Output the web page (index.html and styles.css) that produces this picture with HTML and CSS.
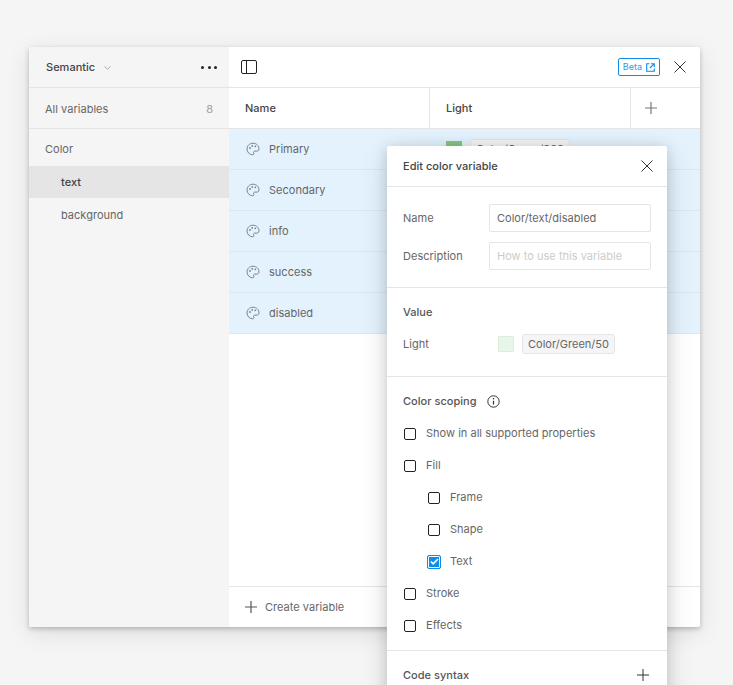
FILE: index.html
```html
<!DOCTYPE html>
<html lang="en">
<head>
<meta charset="utf-8">
<title>Variables</title>
<link rel="stylesheet" href="styles.css">
</head>
<body>
<svg class="defs" width="0" height="0" aria-hidden="true">
  <symbol id="palette" viewBox="0 0 14 14">
    <path d="M7 1.2C3.6 1.2 1 3.8 1 7c0 3.2 2.7 5.8 5.6 5.8 1.3 0 1.5-.9 1.1-1.7-.5-1 .1-2 1.2-2h1.9c1.3 0 2.2-.9 2.2-2.1 0-3.300-2.700-5.800-6-5.800z" fill="none" stroke="#7b828b" stroke-width="1"/>
    <circle cx="4" cy="6" r=".9" fill="#7b828b"/><circle cx="6.200" cy="3.900" r=".9" fill="#7b828b"/><circle cx="9.300" cy="4.300" r=".9" fill="#7b828b"/>
  </symbol>
</svg>
<main class="panel">
  <aside class="sidebar">
    <div class="side-head">
      <span class="collection">Semantic</span>
      <svg class="chev" width="7" height="4" viewBox="0 0 7 4"><path d="M.5.300 3.500 3.300 6.500.300" fill="none" stroke="#aaa" stroke-width="1"/></svg>
      <span class="dots"><i></i><i></i><i></i></span>
    </div>
    <div class="side-all"><span>All variables</span><span class="count">8</span></div>
    <div class="side-groups">
      <div class="group-title">Color</div>
      <div class="group-item selected">text</div>
      <div class="group-item">background</div>
    </div>
  </aside>
  <section class="content">
    <header class="top">
      <svg width="16" height="14" viewBox="0 0 16 14"><rect x=".5" y=".5" width="15" height="13" rx="1.500" fill="none" stroke="#222"/><path d="M5.500 .5v13" stroke="#222"/></svg>
      <span class="beta">Beta
        <svg width="9" height="9" viewBox="0 0 9 9"><path d="M3.500.7H.7v7.600h7.600V5.500M5 .7h3.300V4M8.300.7 4 5" fill="none" stroke="#0d8ce9" stroke-width="1.100"/></svg>
      </span>
      <svg class="close" width="12" height="12" viewBox="0 0 12 12"><path d="m.5.500 11 11m0-11-11 11" stroke="#333" stroke-width="1"/></svg>
    </header>
    <div class="thead">
      <div class="col-name">Name</div>
      <div class="col-light">Light</div>
      <div class="col-add"><svg width="12" height="12" viewBox="0 0 12 12"><path d="M6 0v12M0 6h12" stroke="#777" stroke-width="1.200"/></svg></div>
    </div>
    <div class="rows">
      <div class="row"><div class="col-name"><svg class="pal"><use href="#palette"/></svg>Primary</div><div class="col-light"><span class="swatch green"></span><span class="chip">Color/Green/300</span></div><div class="col-add"></div></div>
      <div class="row"><div class="col-name"><svg class="pal"><use href="#palette"/></svg>Secondary</div><div class="col-light"></div><div class="col-add"></div></div>
      <div class="row"><div class="col-name"><svg class="pal"><use href="#palette"/></svg>info</div><div class="col-light"></div><div class="col-add"></div></div>
      <div class="row"><div class="col-name"><svg class="pal"><use href="#palette"/></svg>success</div><div class="col-light"></div><div class="col-add"></div></div>
      <div class="row"><div class="col-name"><svg class="pal"><use href="#palette"/></svg>disabled</div><div class="col-light"></div><div class="col-add"></div></div>
    </div>
    <footer class="foot">
      <svg width="12" height="12" viewBox="0 0 12 12"><path d="M6 0v12M0 6h12" stroke="#555" stroke-width="1.200"/></svg>
      <span>Create variable</span>
    </footer>
  </section>
</main>
<div class="dialog">
  <div class="dlg-head"><span>Edit color variable</span>
    <svg width="12" height="12" viewBox="0 0 12 12"><path d="m.5.500 11 11m0-11-11 11" stroke="#333" stroke-width="1"/></svg>
  </div>
  <div class="dlg-fields">
    <label class="field"><span>Name</span><span class="input">Color/text/disabled</span></label>
    <label class="field"><span>Description</span><span class="input ph">How to use this variable</span></label>
  </div>
  <div class="dlg-value">
    <div class="dlg-title">Value</div>
    <div class="value-row"><span class="value-label">Light</span><span class="swatch pale"></span><span class="chip">Color/Green/50</span></div>
  </div>
  <div class="dlg-scope">
    <div class="scope-title"><span>Color scoping</span>
      <svg width="13" height="13" viewBox="0 0 13 13"><circle cx="6.500" cy="6.500" r="5.700" fill="none" stroke="#333" stroke-width="1"/><path d="M6.500 5.700v3.800" stroke="#333" stroke-width="1.200"/><circle cx="6.500" cy="3.700" r=".8" fill="#333"/></svg>
    </div>
    <div class="check"><span class="box"></span>Show in all supported properties</div>
    <div class="check"><span class="box"></span>Fill</div>
    <div class="check sub"><span class="box"></span>Frame</div>
    <div class="check sub"><span class="box"></span>Shape</div>
    <div class="check sub"><span class="box on"><svg width="9" height="7" viewBox="0 0 9 7"><path d="m.8 3.500 2.400 2.300L8 1" fill="none" stroke="#fff" stroke-width="1.700"/></svg></span>Text</div>
    <div class="check"><span class="box"></span>Stroke</div>
    <div class="check"><span class="box"></span>Effects</div>
  </div>
  <div class="dlg-code"><span>Code syntax</span>
    <svg width="12" height="12" viewBox="0 0 12 12"><path d="M6 0v12M0 6h12" stroke="#333" stroke-width="1"/></svg>
  </div>
</div>
</body>
</html>
```

FILE: styles.css
```css
* { box-sizing: border-box; }
html, body { height: 100%; }
body {
  margin: 0;
  padding: 47px 33px 0 29px;
  height: 685px;
  overflow: hidden;
  position: relative;
  background: #f5f5f5;
  font-family: Inter, "Liberation Sans", sans-serif;
  font-size: 11px;
  line-height: 16px;
  letter-spacing: .02px;
  color: #666;
}
.defs { position: absolute; }
.panel {
  display: flex;
  height: 580px;
  border-radius: 2px;
  background: #fff;
  box-shadow: 0 2px 5px rgba(0,0,0,.22), 0 6px 24px rgba(0,0,0,.1);
}
.sidebar { width: 200px; background: #f5f5f5; flex: none; border-radius: 2px 0 0 2px; }
.side-head {
  height: 41px;
  display: flex;
  align-items: center;
  padding: 0 12px 0 17px;
  border-bottom: 1px solid #e5e5e5;
}
.collection { font-weight: 500; color: #444; }
.chev { margin-left: 9px; margin-top: 1px; }
.dots { margin-left: auto; display: flex; gap: 3.500px; }
.dots i { width: 3px; height: 3px; border-radius: 50%; background: #222; }
.side-all {
  height: 41px;
  display: flex;
  justify-content: space-between;
  align-items: center;
  padding: 1px 16px 0;
  border-bottom: 1px solid #e5e5e5;
}
.count { color: #a3a3a3; }
.side-groups { padding-top: 4px; }
.group-title { height: 33px; padding: 8px 16px; }
.group-item { height: 33px; padding: 9px 32px; }
.group-item.selected { background: #e5e5e5; color: #444; font-weight: 500; height: 32px; padding-top: 8px; }
.content { flex: 1; display: flex; flex-direction: column; min-width: 0; }
.top {
  height: 41px;
  display: flex;
  align-items: center;
  padding: 0 14px 0 12px;
  border-bottom: 1px solid #e5e5e5;
}
.beta {
  margin-left: auto;
  width: 42px;
  height: 18px;
  display: flex;
  align-items: center;
  justify-content: center;
  gap: 4px;
  border: 1px solid #0d8ce9;
  border-radius: 2px;
  color: #2f9bec;
  font-size: 9px;
}
.close { margin-left: 14px; }
.thead, .row { display: flex; height: 41px; border-bottom: 1px solid #e5e5e5; }
.thead { font-weight: 500; color: #444; }
.col-name { width: 200px; flex: none; display: flex; align-items: center; padding-left: 16px; }
.col-light { width: 201px; flex: none; display: flex; align-items: center; padding-left: 16px; border-left: 1px solid #e5e5e5; }
.col-add { flex: 1; display: flex; align-items: center; padding-left: 14px; border-left: 1px solid #e5e5e5; }
.rows { flex: 1; }
.row { background: #e3f2fd; border-bottom-color: #dde6ee; }
.row .col-light, .row .col-add { border-left: 0; }
.row .col-name { padding-left: 17px; width: 201px; }
.pal { width: 14px; height: 14px; margin-right: 9px; flex: none; }
.swatch { width: 16px; height: 16px; flex: none; }
.green { background: #81c784; }
.pale { background: #e8f5e9; border: 1px solid #dcefdd; }
.chip {
  margin-left: 8px;
  height: 20px;
  padding: 1px 5px;
  border: 1px solid #e5e5e5;
  border-radius: 3px;
  background: #f5f5f5;
  white-space: nowrap;
}
.foot {
  height: 41px;
  flex: none;
  display: flex;
  align-items: center;
  gap: 8px;
  padding-left: 16px;
  border-top: 1px solid #e5e5e5;
}
.dialog {
  position: absolute;
  left: 387px;
  top: 146px;
  width: 280px;
  height: 560px;
  background: #fff;
  border-radius: 2px 2px 0 0;
  box-shadow: 0 2px 14px rgba(0,0,0,.15), 0 8px 30px rgba(0,0,0,.12);
}
.dlg-head {
  height: 41px;
  display: flex;
  align-items: center;
  justify-content: space-between;
  padding: 0 14px 0 16px;
  border-bottom: 1px solid #e5e5e5;
  font-weight: 500;
  color: #444;
}
.dlg-fields {
  height: 101px;
  padding: 17px 16px 0;
  border-bottom: 1px solid #e5e5e5;
  display: flex;
  flex-direction: column;
  gap: 10px;
}
.field { display: flex; align-items: center; justify-content: space-between; }
.input {
  width: 162px;
  height: 28px;
  padding: 5px 7px;
  border: 1px solid #e5e5e5;
  border-radius: 2px;
  color: #666;
}
.input.ph { color: #ccc; }
.dlg-value {
  height: 89px;
  padding: 16px 16px 0;
  border-bottom: 1px solid #e5e5e5;
}
.dlg-title { font-weight: 500; color: #555; }
.value-row { display: flex; align-items: center; margin-top: 14px; }
.value-label { width: 95px; }
.dlg-scope { height: 274px; padding: 16px 16px 0; border-bottom: 1px solid #e5e5e5; }
.scope-title { display: flex; align-items: center; gap: 10px; font-weight: 500; color: #555; margin-bottom: 8px; }
.check { height: 32px; display: flex; align-items: center; gap: 10px; padding-left: 1px; }
.check.sub { padding-left: 25px; }
.box {
  width: 12px;
  height: 12px;
  margin-top: 1px;
  flex: none;
  border: 1.500px solid #222;
  border-radius: 2px;
}
.box.on {
  width: 14px;
  height: 14px;
  margin: 1px -1px 0;
  display: flex;
  align-items: center;
  justify-content: center;
  background: #0d8ce9;
  border: 1px solid #0d8ce9;
  box-shadow: inset 0 0 0 1px #fff;
}
.dlg-code {
  height: 48px;
  display: flex;
  align-items: center;
  justify-content: space-between;
  padding: 0 18px 0 16px;
  font-weight: 500;
  color: #555;
}
```
